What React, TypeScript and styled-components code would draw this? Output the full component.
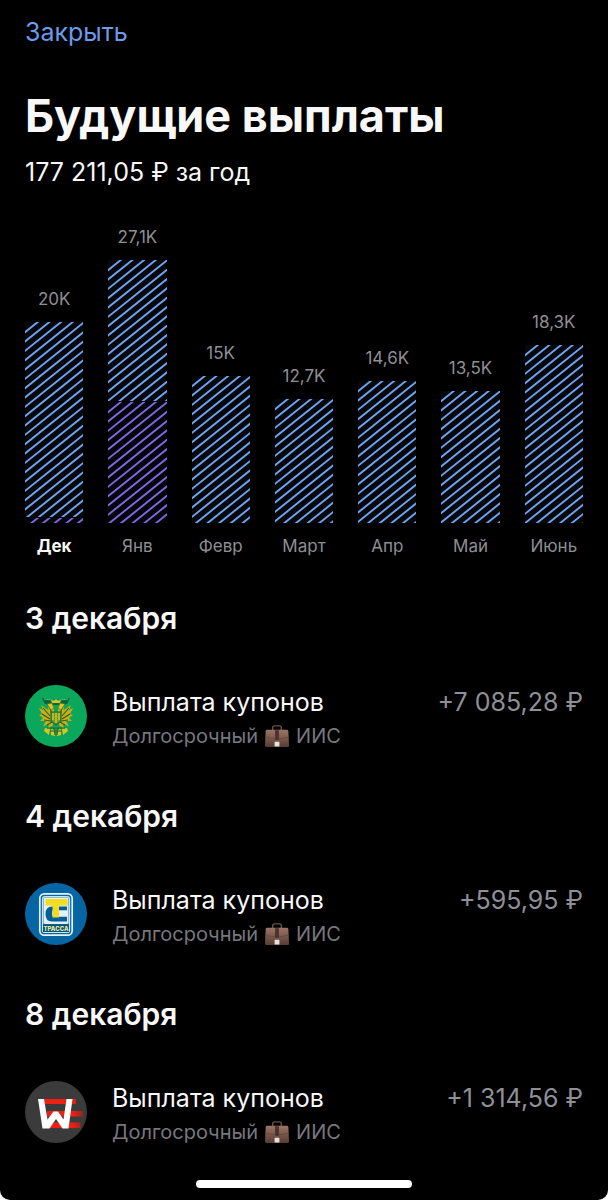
import React from "react";
import styled, { createGlobalStyle } from "styled-components";

const GlobalStyle = createGlobalStyle`
  *, *::before, *::after { box-sizing: border-box; }
  body {
    margin: 0;
    background: #fff;
    color: #f8f8f8;
    font-family: Inter, "Liberation Sans", sans-serif;
  }
`;

const Screen = styled.main`
  display: flex;
  flex-direction: column;
  min-height: 100vh;
  padding: 16px 25px 12px;
  border-radius: 0 0 10px 10px;
  background: #000;
`;

const CloseButton = styled.button`
  align-self: flex-start;
  padding: 0;
  border: 0;
  background: none;
  color: #6c9aec;
  font: inherit;
  font-size: 25px;
  line-height: 32px;
  cursor: pointer;
`;

const Title = styled.h1`
  margin: 44px 0 0;
  font-size: 45px;
  font-weight: 700;
  line-height: 48px;
  white-space: nowrap;
`;

const Total = styled.p`
  margin: 16px 0 0;
  font-size: 25px;
  line-height: 32px;
`;

const Chart = styled.section`
  display: flex;
  align-items: flex-end;
  gap: 25px;
  margin-top: 37px;
`;

const Month = styled.div`
  display: flex;
  flex: 1 1 0;
  flex-direction: column;
  align-items: center;
  min-width: 0;
`;

const Amount = styled.span`
  margin-bottom: 11px;
  color: #8f8f94;
  font-size: 17px;
  line-height: 24px;
  white-space: nowrap;
`;

const MonthName = styled.span<{ $current?: boolean }>`
  margin-top: 11px;
  color: ${(p) => (p.$current ? "#f8f8f8" : "#8f8f94")};
  font-size: 17px;
  font-weight: ${(p) => (p.$current ? 700 : 400)};
  line-height: 24px;
`;

const Segment = styled.svg`
  display: block;
  width: 100%;
  overflow: hidden;

  & + & {
    margin-top: 1px;
  }
`;

const DayTitle = styled.h2`
  margin: 0;
  font-size: 30px;
  font-weight: 600;
  line-height: 36px;
`;

const Days = styled.div`
  display: flex;
  flex-direction: column;
  gap: 46px;
  margin: 42px 0 24px;
`;

const Payment = styled.article`
  display: flex;
  align-items: center;
  gap: 25px;
  height: 72px;
  margin-top: 44px;
`;

const Logo = styled.svg`
  flex: none;
  width: 62px;
  height: 62px;
`;

const Details = styled.div`
  flex: 1;
  min-width: 0;
  padding-top: 4px;
`;

const PaymentRow = styled.div`
  display: flex;
  justify-content: space-between;
  font-size: 25px;
  line-height: 36px;
`;

const Sum = styled.span`
  color: #8f8f98;
  white-space: nowrap;
`;

const Account = styled.div`
  display: flex;
  align-items: center;
  gap: 6px;
  color: #77777f;
  font-size: 20px;
  line-height: 32px;
`;

const CaseIcon = styled.svg`
  width: 26px;
  height: 24px;
`;

const HomeIndicator = styled.div`
  width: 216px;
  height: 8px;
  margin: auto auto 0;
  border-radius: 4px;
  background: #fff;
`;

const BLUE = "#70a4f0";
const VIOLET = "#7c6ade";

const STEP = 28 / 3;

function Stripes({ height, color }: { height: number; color: string }) {
  const count = Math.ceil(height / STEP) + 12;
  return (
    <Segment height={height} aria-hidden="true">
      <rect width="100%" height="100%" fill={color} opacity="0.05" />
      {Array.from({ length: count }, (_, i) => {
        const y = 10.2 + i * STEP;
        return <line key={i} x1={-10} y1={y + 8} x2={120} y2={y - 96} stroke={color} strokeWidth={1.9} />;
      })}
    </Segment>
  );
}

const months = [
  { name: "Дек", amount: "20K", blue: 195, violet: 5, current: true },
  { name: "Янв", amount: "27,1K", blue: 141, violet: 121 },
  { name: "Февр", amount: "15K", blue: 147 },
  { name: "Март", amount: "12,7K", blue: 124 },
  { name: "Апр", amount: "14,6K", blue: 142 },
  { name: "Май", amount: "13,5K", blue: 132 },
  { name: "Июнь", amount: "18,3K", blue: 178 },
];

function EagleLogo() {
  return (
    <Logo viewBox="0 0 62 62" aria-hidden="true">
      <circle cx="31" cy="31" r="31" fill="#0ba75a" />
      <path d="M17 13 Q31 16 45 13 L42 19 Q31 21 20 19Z" fill="#08663a" />
      <path d="M19 14 Q31 17 43 14" fill="none" stroke="#4fbf7b" strokeWidth="1" />
      {[1, -1].map((side) => (
        <g key={side} transform={side === 1 ? undefined : "translate(62 0) scale(-1 1)"}>
          <path d="M29 24 L24 20 L23 25 L16 20 L18 25 L14 23 L17 29 L14 30 L18 33 L15 36 L21 36 L18 41 L24 39 L23 44 L28 40 Z" fill="#c5ae1e" />
          <path d="M18 23 L25 31 M17 29 L25 34 M19 35 L26 36 M22 40 L27 37 M25 23 L27 30" stroke="#365b1d" strokeWidth="1.1" fill="none" />
          <path d="M22 19 L27 18 L29 23 L26 25 Z" fill="#dbc525" stroke="#426a20" strokeWidth=".6" />
          <path d="M20 43 L25 44 L24 50 L19 46Z M26 44 L30 45 L30 51 L26 50Z" fill="#d9c328" />
        </g>
      ))}
      <path d="M27 18 L26 15 L29 16 L31 14 L33 16 L36 15 L35 18Z" fill="#ddc628" />
      <path d="M26 27 H36 V36 L31 40 L26 36Z" fill="#6f9c2b" stroke="#196c38" strokeWidth="1.2" />
      <path d="M28 28 V35 M31 28 V38 M34 28 V35" stroke="#e2cc2c" strokeWidth="1.2" />
      <path d="M22 43 L40 43 M25 46 L37 46 M29 43 L30 50 M33 43 L32 50" stroke="#315f20" strokeWidth="1" />
    </Logo>
  );
}

const LogoLabel = styled.text`
  font-family: Inter, "Liberation Sans", sans-serif;
  font-size: 6px;
  font-weight: 800;
  text-anchor: middle;
`;

function TrassaLogo() {
  return (
    <Logo viewBox="0 0 62 62" role="img" aria-label="Трасса">
      <circle cx="31" cy="31" r="31" fill="#0865a4" />
      <rect x="14.8" y="10.8" width="32.4" height="41.4" rx="4.5" fill="#0865a4" stroke="#e5f3f7" strokeWidth="1.7" />
      <rect x="17.6" y="13.6" width="26.8" height="35.8" rx="2.5" fill="#0865a4" stroke="#cbe6ef" strokeWidth="1.4" />
      <rect x="18.6" y="14.6" width="24.8" height="26.4" rx="1.5" fill="#e2f1f3" />
      <path d="M42 23.5 V27.5 H31 Q27 27.5 27 30.5 Q27 33.5 31 33.5 H42 V38.5 H27 Q20.5 38.5 20.5 31 Q20.5 23.5 27 23.5Z" fill="#075d9b" />
      <path d="M27.5 27.5 H42 V33.5 H27.5Z" fill="#e2f1f3" />
      <path d="M20.5 16 H42.5 V22.5 H34 V34.5 H27.5 V22.5 H20.5Z" fill="#f2dc22" />
      <rect x="18" y="41.5" width="26" height="7.5" fill="#075579" />
      <LogoLabel x="31" y="47.5" fill="#e9eb9a">ТРАССА</LogoLabel>
    </Logo>
  );
}

function WLogo() {
  return (
    <Logo viewBox="0 0 62 62" aria-hidden="true">
      <defs>
        <linearGradient id="fade">
          <stop offset="0.75" stopColor="#ed2013" />
          <stop offset="1" stopColor="#8f2822" />
        </linearGradient>
      </defs>
      <circle cx="31" cy="31" r="31" fill="#3b3b3c" />
      <path d="M18 18 H51 V23 H18Z M22 30 H58 V35.5 H22Z M22 41.5 H55.5 V47 H22Z" fill="url(#fade)" />
      <path d="M13 18 H19 L22.5 38.5 L28.5 30.5 H33 L38.5 38.5 L41.5 18 H47.5 L43.5 47.5 H37.5 L31 38 L24.5 47.5 H17.5Z" fill="#fff" />
    </Logo>
  );
}

function Briefcase() {
  return (
    <CaseIcon viewBox="0 0 27 24" role="img" aria-label="Портфель">
      <defs>
        <linearGradient id="leather" x1="0" y1="0" x2="0" y2="1">
          <stop offset="0" stopColor="#9a7668" />
          <stop offset="0.5" stopColor="#79584b" />
          <stop offset="1" stopColor="#563c33" />
        </linearGradient>
      </defs>
      <path d="M9 6 V3.5 Q9 1.5 11 1.5 H16 Q18 1.5 18 3.5 V6" fill="none" stroke="#6b5047" strokeWidth="1.5" />
      <path d="M3 5.5 H24 Q25 5.5 25.3 7 L26 22 Q26 23.5 24.5 23.5 H2.5 Q1 23.5 1 22 L1.7 7 Q2 5.5 3 5.5Z" fill="url(#leather)" />
      <path d="M1.5 13 Q13.5 17 25.5 13" fill="none" stroke="#684a3f" strokeWidth="1" />
      <path d="M11.5 6 H15.5 V16 H11.5Z" fill="#4b332c" />
      <rect x="11" y="18" width="5" height="5" rx=".7" fill="#e9e1d9" />
    </CaseIcon>
  );
}

const days = [
  { date: "3 декабря", sum: "+7 085,28 ₽", logo: <EagleLogo /> },
  { date: "4 декабря", sum: "+595,95 ₽", logo: <TrassaLogo /> },
  { date: "8 декабря", sum: "+1 314,56 ₽", logo: <WLogo /> },
];

export default function App() {
  return (
    <>
      <GlobalStyle />
      <Screen>
        <CloseButton type="button">Закрыть</CloseButton>
        <Title>Будущие выплаты</Title>
        <Total>177 211,05 ₽ за год</Total>
        <Chart aria-label="Выплаты по месяцам">
          {months.map((m) => (
            <Month key={m.name}>
              <Amount>{m.amount}</Amount>
              <Stripes height={m.blue} color={BLUE} />
              {m.violet && <Stripes height={m.violet} color={VIOLET} />}
              <MonthName $current={m.current}>{m.name}</MonthName>
            </Month>
          ))}
        </Chart>
        <Days>
          {days.map((d) => (
            <section key={d.date}>
              <DayTitle>{d.date}</DayTitle>
              <Payment>
                {d.logo}
                <Details>
                  <PaymentRow>
                    <span>Выплата купонов</span>
                    <Sum>{d.sum}</Sum>
                  </PaymentRow>
                  <Account>
                    <span>Долгосрочный</span>
                    <Briefcase />
                    <span>ИИС</span>
                  </Account>
                </Details>
              </Payment>
            </section>
          ))}
        </Days>
        <HomeIndicator />
      </Screen>
    </>
  );
}
